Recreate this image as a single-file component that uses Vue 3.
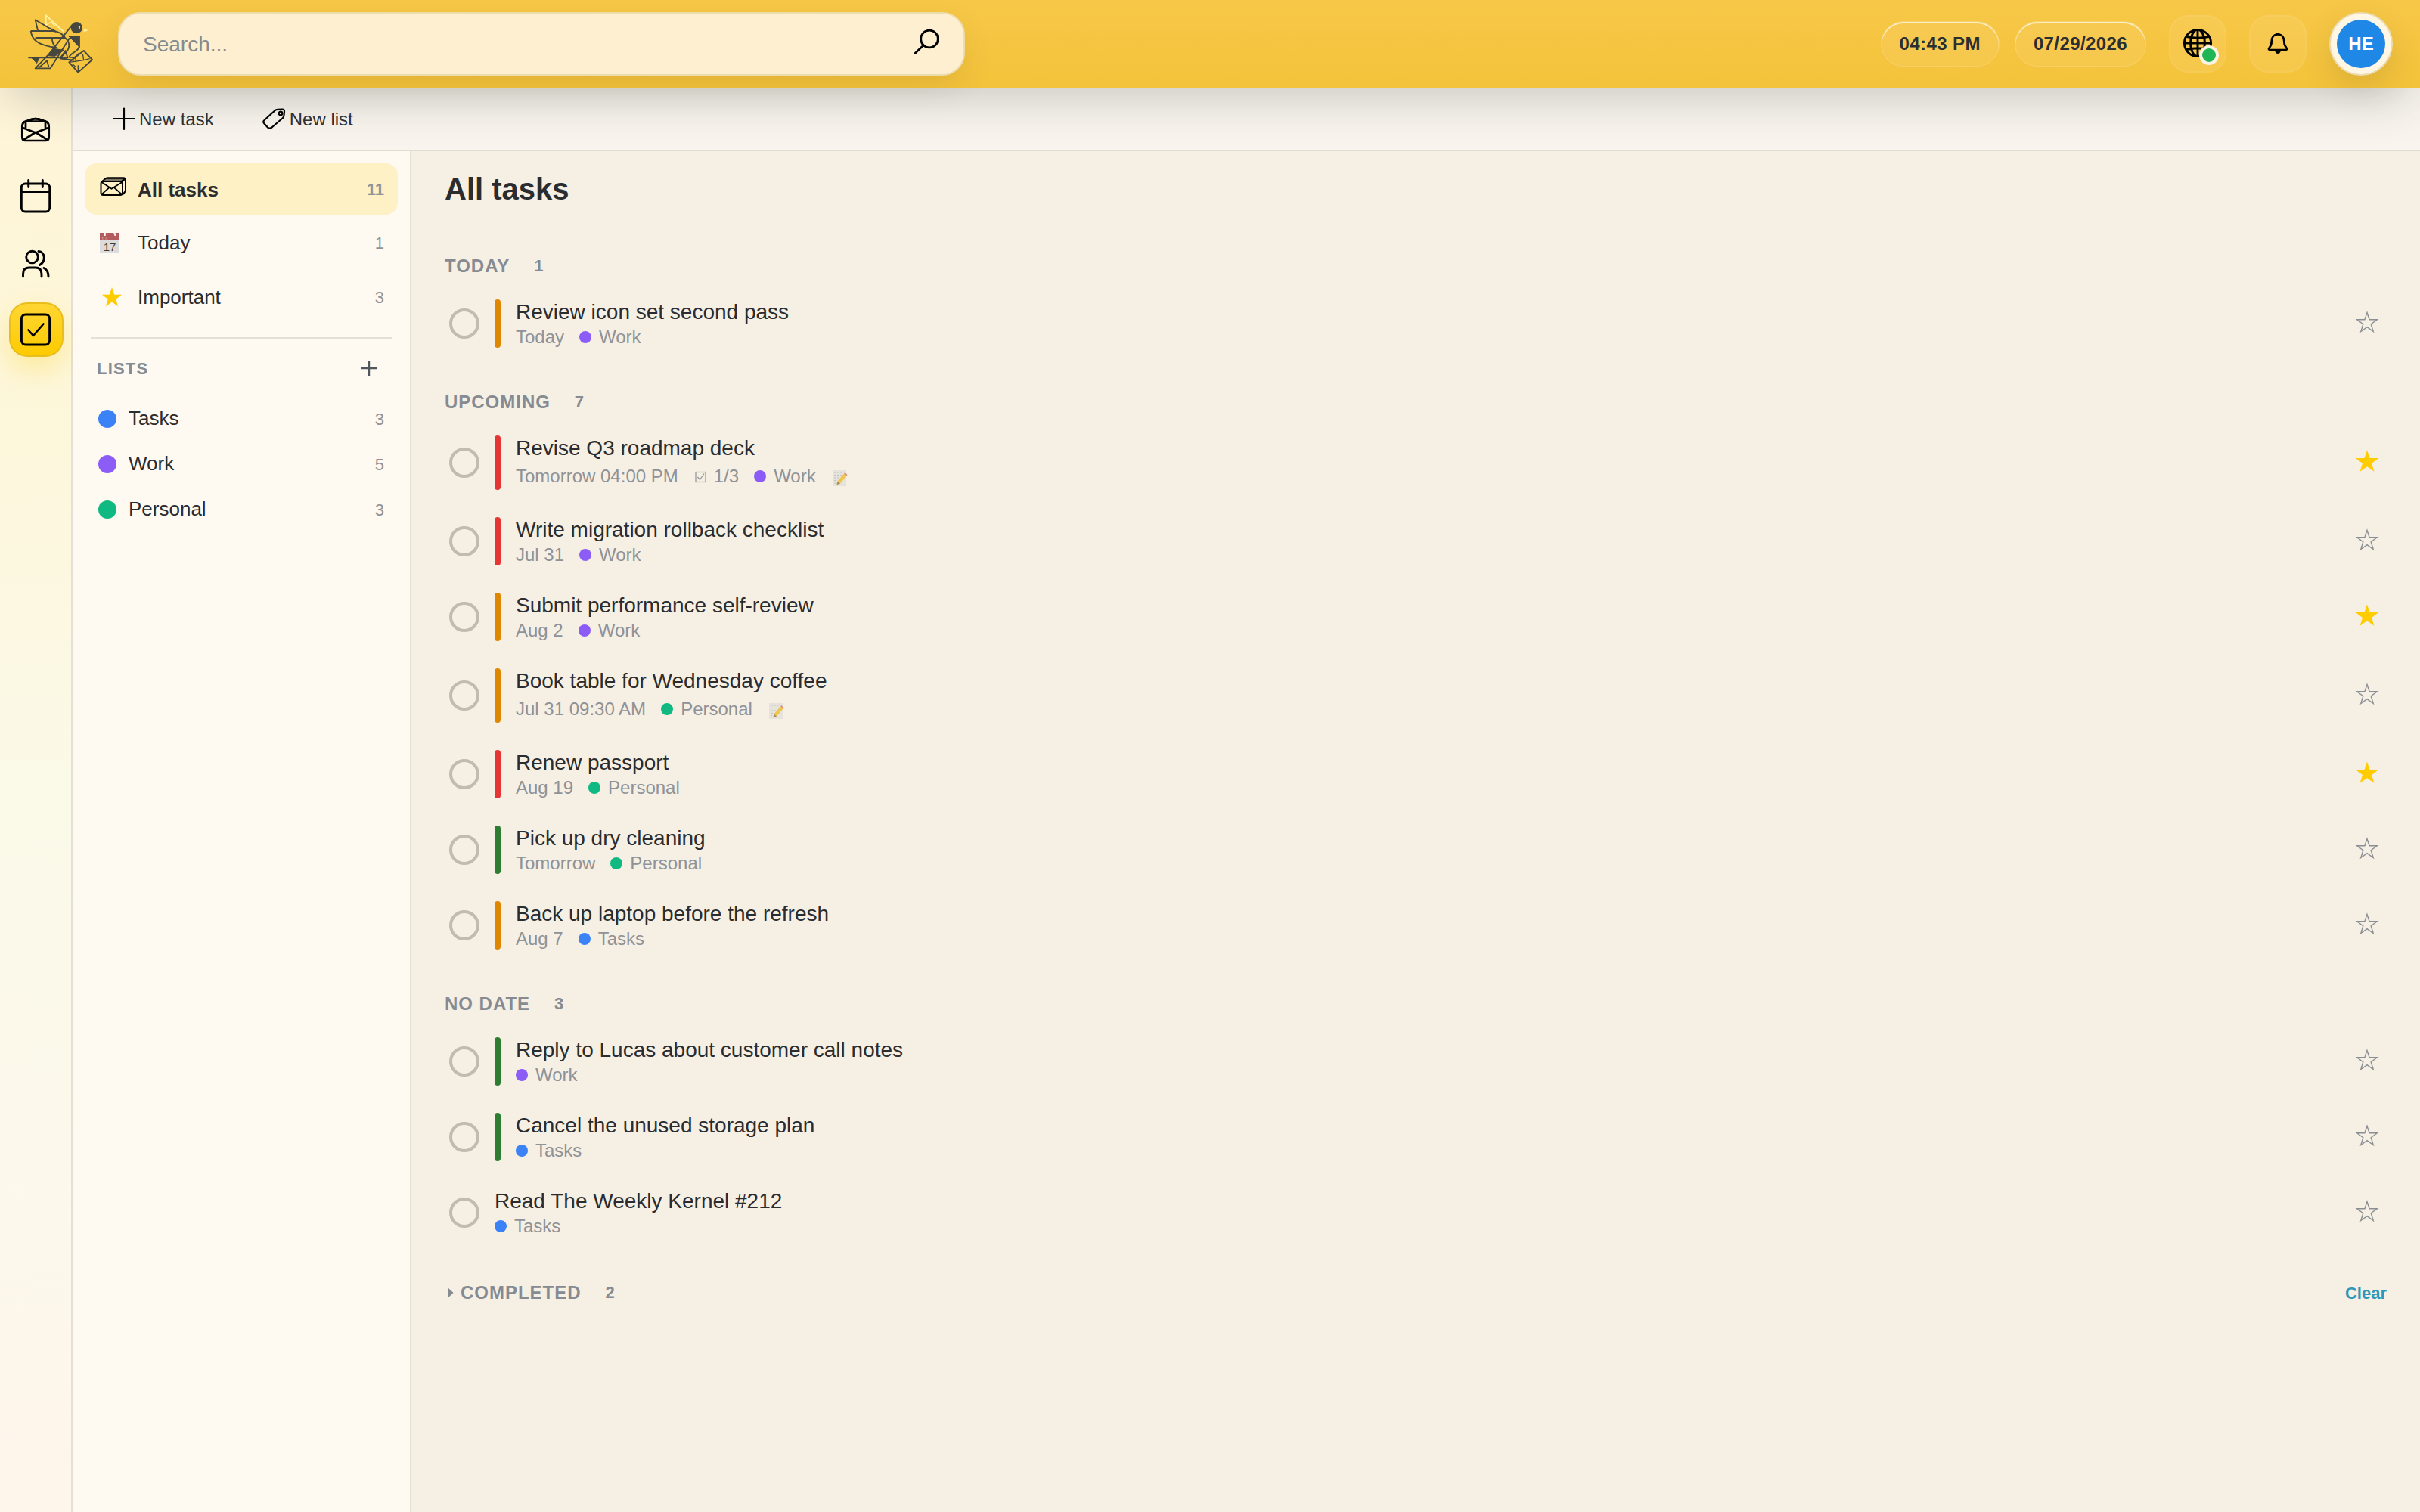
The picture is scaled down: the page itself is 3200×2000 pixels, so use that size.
<script setup>
const colors = { Tasks: '#3b82f6', Work: '#8b5cf6', Personal: '#10b981' }
const prio = { high: '#e53535', mid: '#e08700', low: '#2e7d32' }

const lists = [
  { name: 'Tasks', count: 3 },
  { name: 'Work', count: 5 },
  { name: 'Personal', count: 3 },
]

const sections = [
  {
    title: 'Today',
    tasks: [{ title: 'Review icon set second pass', due: 'Today', list: 'Work', prio: 'mid' }],
  },
  {
    title: 'Upcoming',
    tasks: [
      { title: 'Revise Q3 roadmap deck', due: 'Tomorrow 04:00 PM', steps: '1/3', list: 'Work', note: true, prio: 'high', star: true },
      { title: 'Write migration rollback checklist', due: 'Jul 31', list: 'Work', prio: 'high' },
      { title: 'Submit performance self-review', due: 'Aug 2', list: 'Work', prio: 'mid', star: true },
      { title: 'Book table for Wednesday coffee', due: 'Jul 31 09:30 AM', list: 'Personal', note: true, prio: 'mid' },
      { title: 'Renew passport', due: 'Aug 19', list: 'Personal', prio: 'high', star: true },
      { title: 'Pick up dry cleaning', due: 'Tomorrow', list: 'Personal', prio: 'low' },
      { title: 'Back up laptop before the refresh', due: 'Aug 7', list: 'Tasks', prio: 'mid' },
    ],
  },
  {
    title: 'No date',
    tasks: [
      { title: 'Reply to Lucas about customer call notes', list: 'Work', prio: 'low' },
      { title: 'Cancel the unused storage plan', list: 'Tasks', prio: 'low' },
      { title: 'Read The Weekly Kernel #212', list: 'Tasks' },
    ],
  },
]
</script>

<template>
  <div class="app">
    <header class="header">
      <svg class="logo" viewBox="0 0 300 285" fill="none" stroke="#46473f" stroke-width="5.500" stroke-linejoin="round">
        <path d="M163 93L92 28V67" stroke="#fff0a0" stroke-width="6" />
        <path d="M92 67L112 54L128 70L100 72" stroke="#fff0a0" stroke-width="4" />
        <path d="M242 80L260 88L242 94Z" fill="#fff0a0" stroke="none" />
        <path d="M60 88L50 46L108 80C120 86 128 90 132 93" />
        <path d="M32 90H120C145 92 160 104 168 116" />
        <path d="M32 90C38 128 62 142 108 152L134 156" />
        <path d="M50 117H168" />
        <path d="M117 120C116 138 124 148 134 158" />
        <path d="M198 64L104 182L50 238H110L186 118" />
        <path d="M164 114C184 128 192 150 174 172L150 196" />
        <circle cx="214" cy="77" r="20" fill="#46473f" />
        <path d="M220 72L229 69L227 81L223 81L224 75Z" fill="#f5d888" stroke="none" />
        <path d="M182 110H226V155L206 134Z" fill="#46473f" stroke-width="3" />
        <path d="M224 152C222 172 190 176 184 194L206 196L224 178" />
        <path d="M122 160L164 166L128 190L98 188Z" fill="#46473f" stroke-width="3" />
        <path d="M22 196H160" />
        <path d="M36 198L56 218L66 198Z" fill="#46473f" stroke-width="2" />
        <path d="M66 234L96 208L104 234" />
        <path d="M150 196L170 168L178 196L150 200L204 206" />
        <path d="M242 168L276 204L220 254L184 214Z" />
        <path d="M184 214L242 206L238 180M242 206L266 200M220 254V226M208 190L212 216M198 222L210 232" stroke-width="4" />
      </svg>
      <div class="search">
        <span>Search...</span>
        <svg width="40" height="40" viewBox="0 0 40 40" fill="none" stroke="#000" stroke-width="2.8" stroke-linecap="round">
          <circle cx="24" cy="13.500" r="11.4" />
          <path d="M16 22L5 32.500" />
        </svg>
      </div>
      <div class="right">
        <div class="pill">04:43 PM</div>
        <div class="pill date">07/29/2026</div>
        <div class="hbtn">
          <svg class="globe" width="40" height="40" viewBox="0 0 40 40" fill="none" stroke="#000" stroke-width="2.9">
            <circle cx="20" cy="20" r="17.6" />
            <ellipse cx="20" cy="20" rx="9.4" ry="17.6" />
            <path d="M20 2.400V37.600M2.400 20H37.600M5.500 11.500Q20 15 34.500 11.500M5.500 28.500Q20 25 34.500 28.500" />
          </svg>
          <i class="online"></i>
        </div>
        <div class="hbtn">
          <svg class="bell" width="32" height="32" viewBox="0 0 32 32" fill="none" stroke="#000" stroke-width="2.7" stroke-linejoin="round">
            <path d="M16 4.500C10 4.500 7.700 9 7.700 14C7.700 18.500 6.600 20 4.500 22.500C3.400 24 4 25 5.500 25H26.500C28 25 28.600 24 27.500 22.500C25.400 20 24.300 18.500 24.300 14C24.300 9 22 4.500 16 4.500Z" />
            <path d="M13.300 4.600Q13.500 1.900 16 1.900T18.700 4.600ZM12.200 26.500H19.800Q18.800 30 16 30T12.200 26.500Z" fill="#000" stroke="none" />
          </svg>
        </div>
        <div class="avatar"><span>HE</span></div>
      </div>
    </header>

    <div class="body">
      <nav class="rail">
        <a>
          <svg width="44" height="44" viewBox="0 0 44 44" fill="none" stroke="#000" stroke-width="2.7" stroke-linejoin="round" stroke-linecap="round">
            <path d="M7.500 11Q4.300 13 4.300 17V31.500Q4.300 36 8.500 36H35Q39.700 36 39.700 31.500V17Q39.700 13 36.500 11L31 9Q22 5 13 9Z" />
            <path d="M9 18.500V10.500H35V18.500M5 19L22 25.500L39 19M7 34.500L22 25L37 34.500M11 10.500Q22 3.800 33 10.500" />
          </svg>
        </a>
        <a>
          <svg class="cal" width="44" height="48" viewBox="0 0 44 48" fill="none" stroke="#000" stroke-width="2.9" stroke-linecap="round">
            <rect x="3.300" y="8" width="37.400" height="37" rx="5" />
            <path d="M3.300 18.500H40.700M12.700 3.500V12.500M31.300 3.500V12.500" />
          </svg>
        </a>
        <a>
          <svg width="44" height="44" viewBox="0 0 44 44" fill="none" stroke="#000" stroke-width="2.9" stroke-linecap="round">
            <circle cx="17.500" cy="14" r="7.800" />
            <path d="M5.500 40V36.500Q5.500 28 13.500 28H22Q30 28 30 36.500V40M26 6.500C35 7 35.800 20 27.500 24.500M33 28.500Q39 31 39 40" />
          </svg>
        </a>
        <a class="active">
          <svg width="44" height="44" viewBox="0 0 44 44" fill="none" stroke="#000" stroke-width="2.9" stroke-linecap="round" stroke-linejoin="round">
            <rect x="3.400" y="2" width="37.200" height="40" rx="5.500" />
            <path d="M12.500 22.500L19 30L32.500 14.500" stroke-width="2.600" />
          </svg>
        </a>
      </nav>

      <div class="content">
        <div class="toolbar">
          <div class="tool">
            <svg width="32" height="32" viewBox="0 0 32 32" fill="none" stroke="#000" stroke-width="2.200" stroke-linecap="round"><path d="M16 2.500V30M2.500 16H29.500" /></svg>
            <span>New task</span>
          </div>
          <div class="tool">
            <svg width="32" height="32" viewBox="0 0 32 32" fill="none" stroke="#000" stroke-width="2.200" stroke-linejoin="round">
              <path d="M4 17.500L17.500 5.200Q19 4 21 3.900L27.500 3.500Q30 3.500 30 6L29.500 11.500Q29.300 13.500 28 15L13.500 27.500Q10 30 7.500 27L3 22Q1.200 19.800 4 17.500Z" />
              <circle cx="25" cy="9" r="2.300" />
            </svg>
            <span>New list</span>
          </div>
        </div>

        <div class="panes">
          <aside class="sidebar">
            <div class="item all">
              <span class="ico">
                <svg width="36" height="26" viewBox="0 0 36 26" fill="none" stroke="#000" stroke-width="2" stroke-linejoin="round">
                  <path d="M4 5.500L8 2Q9 1.200 10.500 1.200H31Q34 1.200 34 4V17Q34 19 33 20L30.500 23" />
                  <path d="M3 5.800L8 2H32.500L28.500 6Z" fill="#7d7762" stroke-width="1.600" />
                  <rect x="1.500" y="6" width="28.500" height="18" rx="3" />
                  <path d="M2.500 7L15.500 15.800L29.500 7L33.500 2.500M2.500 23L12.500 14M29 23L18.800 14" stroke-width="1.700" />
                </svg>
              </span>
              <b>All tasks</b><em>11</em>
            </div>
            <div class="item today">
              <span class="ico">
                <svg width="26" height="28" viewBox="0 0 26 28">
                  <path d="M0 11H26V27H0Z" fill="#dcdcdc" />
                  <path d="M0 1H26V11H0Z" fill="#b45b5e" />
                  <path d="M5 1L6.500 4.500L8 1ZM18 1L20.500 4.500L22 1.500Z" fill="#fff" />
                  <circle cx="6.500" cy="3.500" r="1.500" fill="#fff" /><circle cx="20.500" cy="3.500" r="1.500" fill="#fff" />
                  <text x="1.500" y="10.500" font-size="6" fill="#dfa9a8">JUL</text>
                  <text x="13" y="25" font-size="15" text-anchor="middle" fill="#3c3c3c">17</text>
                </svg>
              </span>
              <span>Today</span><em>1</em>
            </div>
            <div class="item important">
              <span class="ico">
                <svg width="32" height="32" viewBox="0 0 32 32"><path d="M16 3L19.300 12.700H29.200L21.300 18.700L24.200 28.300L16 22.500L7.800 28.300L10.700 18.700L2.800 12.700H12.700Z" fill="#ffcc00" /></svg>
              </span>
              <span>Important</span><em>3</em>
            </div>
            <div class="divider"></div>
            <div class="lhead">
              <span>LISTS</span>
              <svg width="20" height="20" viewBox="0 0 20 20" stroke="#50565c" stroke-width="2.400"><path d="M10 0V20M0 10H20" /></svg>
            </div>
            <div v-for="l in lists" :key="l.name" class="item list">
              <i class="dot" :style="{ background: colors[l.name] }"></i>
              <span>{{ l.name }}</span><em>{{ l.count }}</em>
            </div>
          </aside>

          <main class="main">
            <h1>All tasks</h1>
            <section v-for="s in sections" :key="s.title">
              <h2><span>{{ s.title }}</span><small>{{ s.tasks.length }}</small></h2>
              <div v-for="t in s.tasks" :key="t.title" class="row">
                <i class="check"></i>
                <i v-if="t.prio" class="bar" :style="{ background: prio[t.prio] }"></i>
                <div class="text">
                  <div class="title">{{ t.title }}</div>
                  <div class="meta" :class="{ tall: t.note }">
                    <span v-if="t.due">{{ t.due }}</span>
                    <span v-if="t.steps" class="steps">
                      <svg width="18" height="18" viewBox="0 0 18 18" fill="none" stroke="#8f9297" stroke-width="1.200">
                        <rect x="3" y="3.500" width="13" height="13" /><path d="M5.500 10L8.500 13.500L14 5.500" />
                      </svg>
                      {{ t.steps }}
                    </span>
                    <span class="tag"><i :style="{ background: colors[t.list] }"></i>{{ t.list }}</span>
                    <svg v-if="t.note" class="note" width="22" height="24" viewBox="0 0 22 24">
                      <path d="M2 2H20V23H2Z" fill="#e6e3dd" />
                      <path d="M4 5H16M4 8.500H14M4 12H11M4 15.500H8M4 19H6" stroke="#c6c3be" stroke-width="1" stroke-dasharray="3 1" />
                      <path d="M8.500 16.500L17 6.500L20.500 9.500L12 19.500L7.500 21.300Z" fill="#eec64d" />
                      <path d="M17 6.500L18.300 5L21.500 8L20.500 9.500Z" fill="#dc9187" />
                      <path d="M7.500 21.300L8.500 16.500L12 19.500Z" fill="#a98c5c" />
                    </svg>
                  </div>
                </div>
                <svg class="star" width="32" height="32" viewBox="0 0 32 32">
                  <path v-if="t.star" d="M16 1.500L19.600 12.100H31.300L22 18.900L25.400 29.800L16 23.300L6.600 29.800L10 18.900L.7 12.100H12.400Z" fill="#ffcc00" />
                  <path v-else d="M16 3.500L19.100 12.800H29.300L21.200 18.700L24.200 28.500L16 22.600L7.800 28.500L10.800 18.700L2.700 12.800H12.900Z" fill="none" stroke="#8b8e93" stroke-width="1.400" />
                </svg>
              </div>
            </section>
            <div class="done">
              <h2>
                <svg width="16" height="16" viewBox="0 0 16 16"><path d="M4.500 1.500L11.500 8L4.500 14.500Z" fill="#868b91" /></svg>
                <span>Completed</span><small>2</small>
              </h2>
              <a>Clear</a>
            </div>
          </main>
        </div>
      </div>
    </div>
  </div>
</template>

<style>
body { background: #f5efe4; }
</style>

<style scoped>
.app {
  width: 3200px; height: 2000px; overflow: hidden;
  display: flex; flex-direction: column;
  font-family: "Liberation Sans", Arial, sans-serif;
  color: #2b2c2f; background: #f5efe4;
}
.app * { box-sizing: border-box; }
svg { display: block; flex: none; }
i, em { font-style: normal; }

.header {
  position: relative; z-index: 2; flex: none; height: 116px;
  display: flex; align-items: center; padding: 0 36px 0 30px;
  background: linear-gradient(#f7c848, #f4c33b);
  box-shadow: 0 24px 64px -12px rgba(40, 50, 45, .24);
}
.logo { width: 100px; height: 95px; }
.search {
  margin-left: 26px; width: 1120px; height: 84px; border-radius: 30px;
  border: 2px solid #ecdcae; background: #fdefcf;
  display: flex; align-items: center; justify-content: space-between; padding: 0 29px 0 31px;
  font-size: 28px; color: #858a8e;
  box-shadow: 0 16px 44px -6px rgba(90, 70, 20, .15);
}
.search span { padding-top: 2px; }
.right { margin-left: auto; display: flex; align-items: center; }
.pill {
  height: 60px; border-radius: 30px; padding: 0 24px; line-height: 58px;
  border: 1px solid rgba(255, 255, 255, .14);
  background: rgba(255, 240, 200, .1);
  box-shadow: inset 0 2px 0 rgba(255, 255, 255, .65);
  font-size: 24px; font-weight: 700; letter-spacing: .4px; color: #2b2f31;
}
.date { margin: 0 30px 0 20px; }
.hbtn {
  position: relative; width: 76px; height: 76px; border-radius: 26px; margin-right: 30px;
  display: flex; align-items: center; justify-content: center;
  background: rgba(255, 240, 200, .1); border: 2px solid rgba(255, 255, 255, .07);
}
.globe { margin-top: -2px; }
.bell { margin-top: -2px; }
.online {
  position: absolute; left: 38px; top: 38px; width: 26px; height: 26px; border-radius: 50%;
  background: #21b655; border: 4px solid #fcf4e2;
}
.avatar {
  width: 84px; height: 84px; border-radius: 50%; background: #fff6e4; border: 2px solid #ecdcb4;
  display: flex; align-items: center; justify-content: center;
  box-shadow: 0 16px 44px -4px rgba(80, 60, 20, .18);
}
.avatar span {
  width: 64px; height: 64px; border-radius: 50%; background: #1f87e5; color: #fff;
  font-size: 24px; font-weight: 700; line-height: 63px; text-align: center;
}

.body { flex: 1; display: flex; min-height: 0; }
.rail {
  width: 96px; flex: none; border-right: 2px solid #e4e0d3; padding: 20px 0 0 12px;
  display: flex; flex-direction: column; gap: 16px;
  background: linear-gradient(#fff5da, #fdf6d8 18%, #fbf9e8 50%, #fcf9ec 75%, #fef5eb);
}
.rail a {
  width: 72px; height: 72px; border-radius: 24px; padding-right: 2px;
  display: flex; align-items: center; justify-content: center;
}
.rail .cal { margin-top: -3px; }
.rail .active {
  background: linear-gradient(#ffd633, #fecb00); border: 2px solid #e8bd1c; padding: 0 2px 0 0;
  box-shadow: 0 16px 36px rgba(255, 204, 0, .28);
}
.content { flex: 1; display: flex; flex-direction: column; min-width: 0; }
.toolbar {
  height: 84px; flex: none; border-bottom: 2px solid #e1ddd1; background: #f9f5ee;
  display: flex; align-items: center; gap: 63px; padding: 0 52px;
}
.tool { display: flex; align-items: center; gap: 4px; font-size: 24px; color: #303135; }
.tool span { padding-top: 2px; }
.tool + .tool { gap: 5px; }
.panes { flex: 1; display: flex; min-height: 0; }

.sidebar { width: 448px; flex: none; background: #fef9f1; border-right: 2px solid #e4e0d6; padding: 16px; }
.item { display: flex; align-items: center; border-radius: 16px; font-size: 26px; padding: 0 18px 0 20px; }
.item em { margin-left: auto; font-size: 22px; color: #8f9297; padding-top: 1px; }
.ico { width: 50px; display: flex; }
.all { height: 68px; background: #fdf1c5; margin-bottom: 4px; }
.all b { padding-top: 2px; }
.all em { font-weight: 700; }
.all .ico { margin-top: -6px; }
.today { height: 66px; margin-bottom: 4px; }
.important { height: 70px; }
.divider { height: 2px; background: #e4e0d6; margin: 18px 8px 0; }
.lhead {
  height: 36px; margin: 22px 0 18px; padding: 0 28px 0 16px;
  display: flex; align-items: center; justify-content: space-between;
  font-size: 22px; font-weight: 700; letter-spacing: 1.2px; color: #868b91;
}
.lhead svg { margin-top: -3px; }
.list { height: 60px; padding-left: 18px; }
.list span { margin-top: -1px; }
.dot { width: 24px; height: 24px; border-radius: 50%; margin-right: 16px; }

.main { flex: 1; min-width: 0; padding: 27px 44px 0; }
h1 { margin: 0; font-size: 40px; line-height: 46px; font-weight: 700; }
section { margin: 36px 0; }
h1 + section { margin-top: 61px; }
h2 {
  margin: 0 0 8px; height: 36px; display: flex; align-items: center;
  font-size: 24px; font-weight: 700; letter-spacing: .98px; text-transform: uppercase; color: #868b91;
}
h2 small { margin-left: 32px; font-size: 22px; letter-spacing: 0; }
.row { display: flex; align-items: center; padding: 18px 10px 18px 6px; }
.check { width: 40px; height: 40px; border: 4px solid #c1bbb0; border-radius: 50%; margin-right: 20px; flex: none; }
.bar { width: 8px; align-self: stretch; border-radius: 4px; margin-right: 20px; }
.text { flex: 1; }
.title { font-size: 28px; line-height: 32px; padding-top: 1px; }
.meta {
  margin-top: 3px; height: 28px; display: flex; align-items: center; gap: 20px;
  font-size: 24px; color: #8f9297;
}
.meta.tall { height: 36px; }
.steps { display: flex; align-items: center; gap: 9px; }
.tag { display: flex; align-items: center; gap: 10px; }
.tag i { width: 16px; height: 16px; border-radius: 50%; }
.note { margin-top: 4px; }
.star { margin-top: -4px; }
.done { display: flex; justify-content: space-between; margin-top: 38px; }
.done h2 svg { margin-right: 5px; }
.done a { font-size: 22px; font-weight: 700; line-height: 37px; color: #2f97b7; }
</style>
